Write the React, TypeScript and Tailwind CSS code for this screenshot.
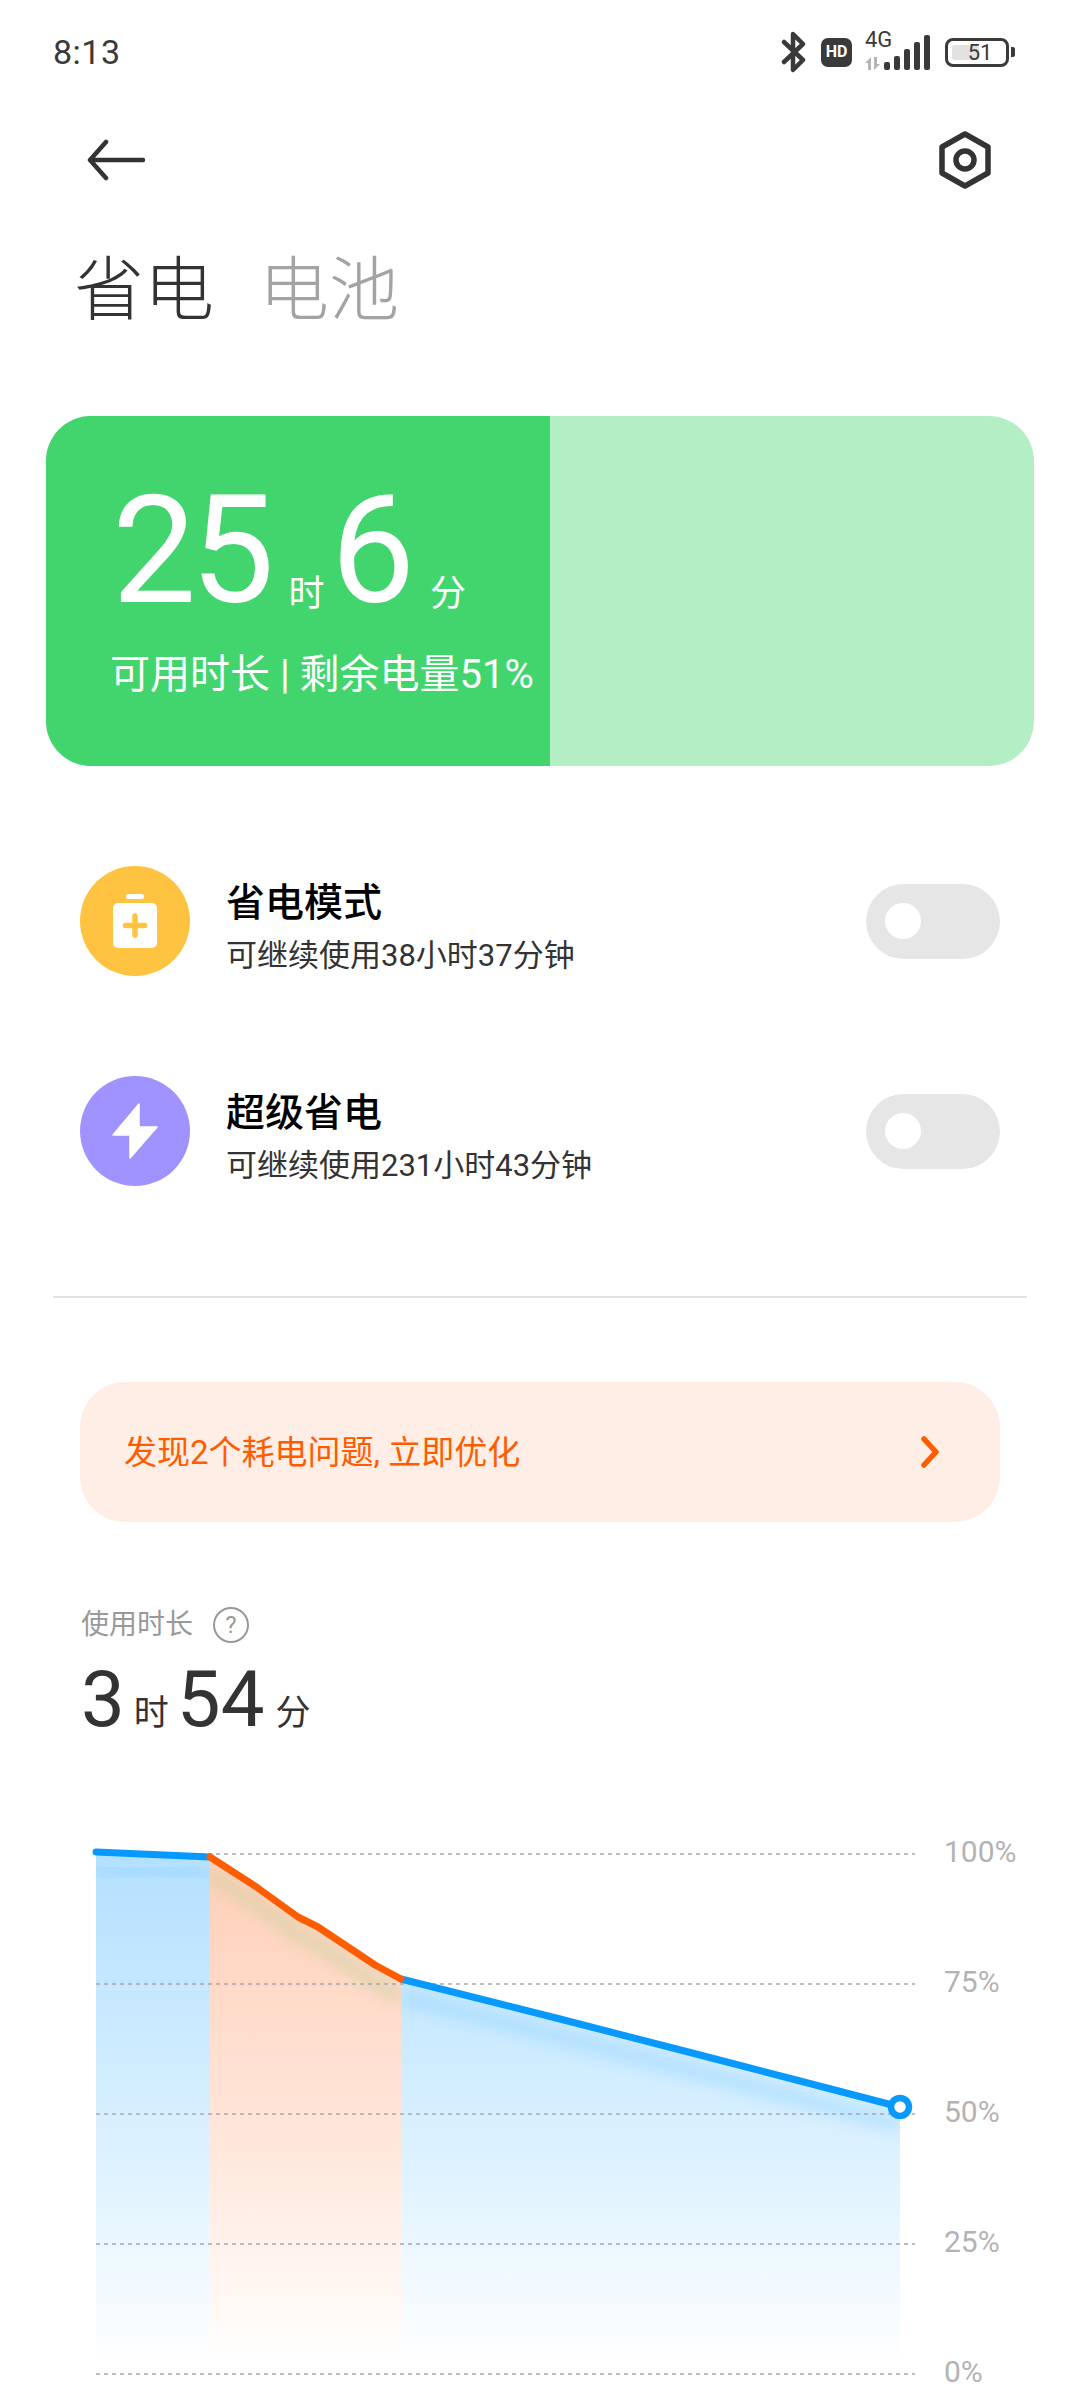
import React from "react";

const sans = "font-['Roboto','Noto_Sans_CJK_SC',sans-serif]";

function StatusIcons() {
  return (
    <div className="flex items-center">
      <svg width="26" height="42" viewBox="0 0 26 42" fill="none" stroke="#3a3a3a" strokeWidth="4.5" strokeLinejoin="round" strokeLinecap="round">
        <path d="M3 11 L22 29 L12 39 L12 3 L22 13 L3 31" />
      </svg>
      <div className="ml-[14px] w-[31px] h-[29px] rounded-[7px] bg-[#3a3a3a] flex items-center justify-center text-[16px] leading-none font-bold text-white font-['Roboto',sans-serif]">
        HD
      </div>
      <div className="relative ml-[13px] w-[66px] h-[40px]">
        <span className="absolute left-0 top-[-3px] text-[22px] leading-[22px] text-[#3a3a3a] font-['Roboto',sans-serif]">4G</span>
        <svg className="absolute left-0 top-0" width="66" height="40" viewBox="0 0 66 40">
          <path d="M0 31 L6 25 L6 38 L3 38 L3 31 Z M9 25 L12 25 L12 32 L15 32 L9 38 Z" fill="#b5b5b5" />
          <rect x="19" y="30" width="6" height="8" rx="2" fill="#3a3a3a" />
          <rect x="29" y="24" width="6" height="14" rx="2" fill="#3a3a3a" />
          <rect x="39" y="17" width="6" height="21" rx="2" fill="#3a3a3a" />
          <rect x="49" y="10" width="6" height="28" rx="2" fill="#3a3a3a" />
          <rect x="59" y="3" width="6" height="35" rx="2" fill="#3a3a3a" />
        </svg>
      </div>
      <div className="ml-[14px] relative w-[64px] h-[29px] rounded-[8px] border-[3px] border-[#3a3a3a] overflow-hidden">
        <div className="absolute left-[4px] top-[4px] bottom-[4px] w-[27px] rounded-[3px] bg-[#e2e2e2]" />
        <div className="relative text-center pl-[6px] text-[22px] leading-[23px] text-[#3a3a3a] font-['Roboto',sans-serif]">51</div>
      </div>
      <div className="ml-[2px] w-[4px] h-[10px] rounded-r-[2px] bg-[#3a3a3a]" />
    </div>
  );
}

function ModeRow({ title, sub, color, icon }: { title: string; sub: string; color: string; icon: React.ReactNode }) {
  return (
    <div className="h-[210px] pl-[80px] pr-[80px] flex items-center">
      <div className={`w-[110px] h-[110px] rounded-full flex items-center justify-center ${color}`}>{icon}</div>
      <div className="ml-[36px] flex-1 pt-[12px]">
        <div className="text-[39px] leading-[50px] font-medium text-black">{title}</div>
        <div className="mt-[8px] text-[31px] leading-[40px] text-[#333]">{sub}</div>
      </div>
      <div className="w-[134px] h-[75px] rounded-full bg-[#e6e6e6] flex items-center pl-[19px]">
        <div className="w-[36px] h-[36px] rounded-full bg-white" />
      </div>
    </div>
  );
}

function UsageChart() {
  const grid = [1854, 1984, 2114, 2244, 2374];
  const top = 1840;
  const y = (v: number) => v - top;
  const x = (v: number) => v - 90;
  const blueA = `M${x(96)} ${y(1852)} L${x(210)} ${y(1857)}`;
  const orange = `M${x(210)} ${y(1857)} L${x(255)} ${y(1886)} L${x(298)} ${y(1917)} L${x(318)} ${y(1927)} L${x(375)} ${y(1965)} L${x(401)} ${y(1979)}`;
  const blueB = `M${x(401)} ${y(1979)} L${x(560)} ${y(2019)} L${x(700)} ${y(2055)} L${x(800)} ${y(2081)} L${x(900)} ${y(2107)}`;
  const bot = y(2365);
  return (
    <div className="flex mt-[100px] pl-[90px]">
      <svg width="830" height="560" viewBox="0 0 830 560" className="shrink-0">
        <defs>
          <linearGradient id="blueFill" gradientUnits="userSpaceOnUse" x1="0" y1={y(1852)} x2="0" y2={bot}>
            <stop offset="0" stopColor="#b3e0ff" />
            <stop offset="0.55" stopColor="#d9f0ff" />
            <stop offset="1" stopColor="#ffffff" />
          </linearGradient>
          <linearGradient id="orangeFill" gradientUnits="userSpaceOnUse" x1="0" y1={y(1857)} x2="0" y2={bot}>
            <stop offset="0" stopColor="#ffcfb8" />
            <stop offset="0.55" stopColor="#ffe6da" />
            <stop offset="1" stopColor="#ffffff" />
          </linearGradient>
          <filter id="soft" x="-10%" y="-50%" width="120%" height="200%">
            <feGaussianBlur stdDeviation="7" />
          </filter>
          <clipPath id="clipBlue">
            <path d={`${blueA} L${x(210)} ${bot} L${x(96)} ${bot} Z`} />
            <path d={`${blueB} L${x(900)} ${bot} L${x(401)} ${bot} Z`} />
          </clipPath>
          <clipPath id="clipOrange">
            <path d={`${orange} L${x(401)} ${bot} L${x(210)} ${bot} Z`} />
          </clipPath>
        </defs>
        <path d={`${blueA} L${x(210)} ${bot} L${x(96)} ${bot} Z`} fill="url(#blueFill)" />
        <path d={`${orange} L${x(401)} ${bot} L${x(210)} ${bot} Z`} fill="url(#orangeFill)" />
        <path d={`${blueB} L${x(900)} ${bot} L${x(401)} ${bot} Z`} fill="url(#blueFill)" />
        <g clipPath="url(#clipBlue)">
          <path d={blueA} transform="translate(0 18)" stroke="#8ed2ff" strokeWidth="14" fill="none" opacity="0.45" filter="url(#soft)" />
          <path d={blueB} transform="translate(0 18)" stroke="#8ed2ff" strokeWidth="14" fill="none" opacity="0.45" filter="url(#soft)" />
        </g>
        <g clipPath="url(#clipOrange)">
          <path d={orange} transform="translate(0 18)" stroke="#c9d0a0" strokeWidth="16" fill="none" opacity="0.5" filter="url(#soft)" />
        </g>
        {grid.map((g) => (
          <line key={g} x1={x(96)} x2={x(915)} y1={y(g)} y2={y(g)} stroke="#a8a8a8" strokeWidth="1.5" strokeDasharray="4 4" />
        ))}
        <path d={blueA} stroke="#0899ff" strokeWidth="7" strokeLinecap="round" fill="none" />
        <path d={blueB} stroke="#0899ff" strokeWidth="7" strokeLinecap="round" fill="none" />
        <path d={orange} stroke="#ff5c00" strokeWidth="7" strokeLinecap="round" strokeLinejoin="round" fill="none" />
        <circle cx={x(900)} cy={y(2107)} r="9" fill="#fff" stroke="#0899ff" strokeWidth="6.5" />
      </svg>
      <div className="ml-[24px] flex flex-col text-[30px] leading-[40px] text-[#b3b3b3] font-['Roboto',sans-serif]">
        <span className="mt-[-8px]">100%</span>
        <span className="mt-[90px]">75%</span>
        <span className="mt-[90px]">50%</span>
        <span className="mt-[90px]">25%</span>
        <span className="mt-[90px]">0%</span>
      </div>
    </div>
  );
}

export default function App() {
  return (
    <div className={`w-[1080px] h-[2400px] overflow-hidden bg-white flex flex-col ${sans}`}>
      {/* status bar */}
      <div className="h-[104px] pl-[53px] pr-[65px] flex items-center justify-between">
        <span className="text-[34px] leading-none text-[#3a3a3a] tracking-[0.5px]">8:13</span>
        <StatusIcons />
      </div>

      {/* nav */}
      <div className="h-[112px] pl-[87px] pr-[88px] flex items-center justify-between">
        <svg width="58" height="42" viewBox="0 0 58 42" fill="none" stroke="#333" strokeWidth="4.5" strokeLinecap="round" strokeLinejoin="round">
          <path d="M56 21 H4 M19 3 L3 21 L19 39" />
        </svg>
        <svg width="54" height="58" viewBox="0 0 54 58" fill="none" stroke="#333" strokeWidth="5.5" strokeLinejoin="round">
          <path d="M27 3 L50 16 L50 42 L27 55 L4 42 L4 16 Z" />
          <circle cx="27" cy="29" r="9" />
        </svg>
      </div>

      {/* title tabs */}
      <div className="h-[148px] pl-[74px] pt-[2px] flex items-center text-[70px] leading-none font-light">
        <span className="text-[#333]">省电</span>
        <span className="ml-[45px] text-[#a3a3a3]">电池</span>
      </div>

      {/* battery card */}
      <div className="mt-[52px] mx-[46px] h-[350px] rounded-[45px] overflow-hidden flex bg-[#b3eec5]">
        <div className="w-[504px] bg-[#42d56d] text-white pl-[66px] pt-[60px]">
          <div className="flex items-end h-[150px]">
            <span className="text-[150px] leading-[150px] tracking-[-6px]">25</span>
            <span className="ml-[20px] mb-[10px] text-[36px] leading-[44px]">时</span>
            <span className="ml-[6px] text-[150px] leading-[150px]">6</span>
            <span className="ml-[15px] mb-[10px] text-[36px] leading-[44px]">分</span>
          </div>
          <div className="mt-[24px] ml-[-2px] text-[40px] leading-[50px] whitespace-nowrap">可用时长 | 剩余电量51%</div>
        </div>
      </div>

      {/* modes */}
      <div className="mt-[50px]">
        <ModeRow
          title="省电模式"
          sub="可继续使用38小时37分钟"
          color="bg-[#ffc342]"
          icon={
            <svg width="44" height="54" viewBox="0 0 44 54">
              <rect x="13" y="0" width="18" height="5" rx="2.5" fill="#fff" />
              <rect x="0" y="9" width="44" height="45" rx="5" fill="#fff" />
              <path d="M22 22 V41 M12.5 31.5 H31.5" stroke="#ffc342" strokeWidth="5.5" strokeLinecap="round" />
            </svg>
          }
        />
        <ModeRow
          title="超级省电"
          sub="可继续使用231小时43分钟"
          color="bg-[#9f94ff]"
          icon={
            <svg width="46" height="56" viewBox="0 0 46 56">
              <path d="M27 1 L1 32 H18 V55 L45 24 H27 Z" fill="#fff" stroke="#fff" strokeWidth="1.5" strokeLinejoin="round" />
            </svg>
          }
        />
      </div>

      <div className="mt-[60px] mx-[53px] h-[2px] bg-[#e2e2e2]" />

      {/* tip banner */}
      <div className="mt-[84px] mx-[80px] h-[140px] rounded-[45px] bg-[#ffeee6] pl-[44px] pr-[60px] flex items-center justify-between">
        <span className="text-[33px] leading-none text-[#ff5c00] whitespace-nowrap">发现2个耗电问题, 立即优化</span>
        <svg width="20" height="32" viewBox="0 0 20 32" fill="none" stroke="#ff5c00" strokeWidth="5.5" strokeLinecap="round" strokeLinejoin="round">
          <path d="M4 3 L16 16 L4 29" />
        </svg>
      </div>

      {/* usage */}
      <div className="mt-[84px] pl-[81px]">
        <div className="flex items-center h-[38px]">
          <span className="text-[28px] leading-none text-[#999]">使用时长</span>
          <span className="ml-[20px] w-[36px] h-[36px] rounded-full border-2 border-[#999] flex items-center justify-center text-[24px] leading-none text-[#999]">?</span>
        </div>
        <div className="mt-[16px] flex items-end h-[80px] text-[#333]">
          <span className="text-[78px] leading-[80px]">3</span>
          <span className="ml-[9px] mb-[4px] text-[35px] leading-[44px]">时</span>
          <span className="ml-[8px] text-[78px] leading-[80px]">54</span>
          <span className="ml-[11px] mb-[4px] text-[35px] leading-[44px]">分</span>
        </div>
      </div>

      <UsageChart />
    </div>
  );
}
